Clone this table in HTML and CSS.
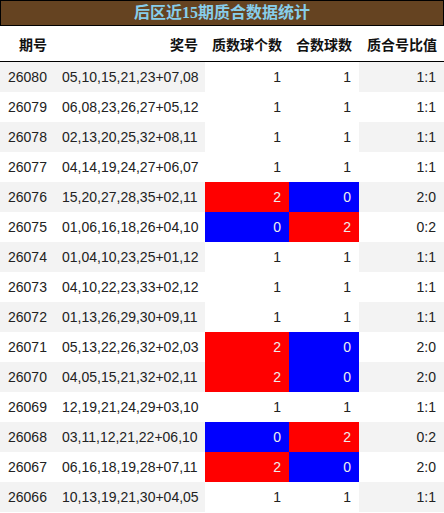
FILE: index.html
```html
<!DOCTYPE html>
<html lang="zh">
<head>
<meta charset="utf-8">
<link rel="stylesheet" href="styles.css">
</head>
<body>
<div class="title">后区近15期质合数据统计</div>
<table class="stats">
  <colgroup>
    <col class="c-issue"><col class="c-nums"><col class="c-prime"><col class="c-comp"><col class="c-ratio">
  </colgroup>
  <thead>
    <tr><th>期号</th><th>奖号</th><th>质数球个数</th><th>合数球数</th><th>质合号比值</th></tr>
  </thead>
  <tbody>
    <tr><td>26080</td><td>05,10,15,21,23+07,08</td><td class="mid">1</td><td class="mid">1</td><td>1:1</td></tr>
    <tr><td>26079</td><td>06,08,23,26,27+05,12</td><td class="mid">1</td><td class="mid">1</td><td>1:1</td></tr>
    <tr><td>26078</td><td>02,13,20,25,32+08,11</td><td class="mid">1</td><td class="mid">1</td><td>1:1</td></tr>
    <tr><td>26077</td><td>04,14,19,24,27+06,07</td><td class="mid">1</td><td class="mid">1</td><td>1:1</td></tr>
    <tr><td>26076</td><td>15,20,27,28,35+02,11</td><td class="mid red">2</td><td class="mid blue">0</td><td>2:0</td></tr>
    <tr><td>26075</td><td>01,06,16,18,26+04,10</td><td class="mid blue">0</td><td class="mid red">2</td><td>0:2</td></tr>
    <tr><td>26074</td><td>01,04,10,23,25+01,12</td><td class="mid">1</td><td class="mid">1</td><td>1:1</td></tr>
    <tr><td>26073</td><td>04,10,22,23,33+02,12</td><td class="mid">1</td><td class="mid">1</td><td>1:1</td></tr>
    <tr><td>26072</td><td>01,13,26,29,30+09,11</td><td class="mid">1</td><td class="mid">1</td><td>1:1</td></tr>
    <tr><td>26071</td><td>05,13,22,26,32+02,03</td><td class="mid red">2</td><td class="mid blue">0</td><td>2:0</td></tr>
    <tr><td>26070</td><td>04,05,15,21,32+02,11</td><td class="mid red">2</td><td class="mid blue">0</td><td>2:0</td></tr>
    <tr><td>26069</td><td>12,19,21,24,29+03,10</td><td class="mid">1</td><td class="mid">1</td><td>1:1</td></tr>
    <tr><td>26068</td><td>03,11,12,21,22+06,10</td><td class="mid blue">0</td><td class="mid red">2</td><td>0:2</td></tr>
    <tr><td>26067</td><td>06,16,18,19,28+07,11</td><td class="mid red">2</td><td class="mid blue">0</td><td>2:0</td></tr>
    <tr><td>26066</td><td>10,13,19,21,30+04,05</td><td class="mid">1</td><td class="mid">1</td><td>1:1</td></tr>
  </tbody>
</table>
</body>
</html>
```
FILE: styles.css
```css
html, body {
  margin: 0;
  padding: 0;
  background: #fff;
}
body {
  width: 444px;
  font-family: "Liberation Sans", "Noto Sans CJK SC", sans-serif;
  color: #222;
}
.title {
  box-sizing: border-box;
  height: 26px;
  border: 1px solid #000;
  background: #654321;
  color: #87ceeb;
  font-family: "Liberation Serif", "Noto Sans CJK SC", serif;
  font-weight: bold;
  font-size: 16px;
  line-height: 24px;
  text-align: center;
}
.stats {
  width: 444px;
  border-collapse: collapse;
  table-layout: fixed;
  border-spacing: 0;
}
.c-issue { width: 54px; }
.c-nums { width: 151px; }
.c-prime { width: 84px; }
.c-comp { width: 70px; }
.c-ratio { width: 85px; }
.stats th {
  height: 35px;
  padding: 0 7px 0 0;
  text-align: right;
  font-family: "Noto Sans CJK SC", sans-serif;
  font-weight: bold;
  font-size: 14px;
  color: #111;
  border-bottom: 1px solid #000;
  white-space: nowrap;
}
.stats td {
  height: 30px;
  padding: 0 8px;
  font-size: 14px;
  line-height: 30px;
  text-align: right;
  white-space: nowrap;
}
.stats td:first-child {
  padding: 0 0 0 8px;
  text-align: left;
}
.stats tbody tr:nth-child(odd) td {
  background: #f3f3f3;
}
.stats tbody tr td.mid {
  background: #fff;
}
.stats tbody tr td.red {
  background: #ff0000;
  color: #eee;
}
.stats tbody tr td.blue {
  background: #0000ff;
  color: #eee;
}
```
